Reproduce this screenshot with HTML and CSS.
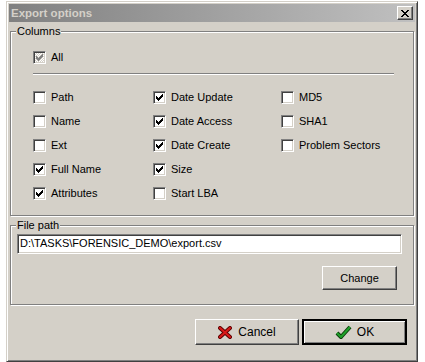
FILE: index.html
```html
<!DOCTYPE html>
<html>
<head>
  <title>Export options</title>
  <link rel="stylesheet" href="styles.css">
</head>
<body>
  <div class="window">
    <div class="titlebar">
      <span class="title">Export options</span>
      <span class="close-btn">
        <svg width="8" height="7" viewBox="0 0 8 7"><path d="M0 0h2v1h-2z M6 0h2v1h-2z M1 1h2v1h-2z M5 1h2v1h-2z M2 2h4v1h-4z M3 3h2v1h-2z M2 4h4v1h-4z M1 5h2v1h-2z M5 5h2v1h-2z M0 6h2v1h-2z M6 6h2v1h-2z" fill="#000"/></svg>
      </span>
    </div>

    <!-- columns to export -->
    <div class="group columns">
      <span class="group-label">Columns</span>
      <div class="opt">
        <span class="check disabled"><svg width="7" height="7" viewBox="0 0 7 7"><path class="tick" d="M6 0h1v1h-1z M5 1h2v1h-2z M0 2h1v1h-1z M4 2h3v1h-3z M0 3h2v1h-2z M3 3h3v1h-3z M0 4h5v1h-5z M1 5h3v1h-3z M2 6h1v1h-1z"/></svg></span>
        <span>All</span>
      </div>
      <div class="separator"></div>
      <div class="options">
        <div class="col col-1">
          <div class="opt"><span class="check"></span><span>Path</span></div>
          <div class="opt"><span class="check"></span><span>Name</span></div>
          <div class="opt"><span class="check"></span><span>Ext</span></div>
          <div class="opt"><span class="check"><svg width="7" height="7" viewBox="0 0 7 7"><path class="tick" d="M6 0h1v1h-1z M5 1h2v1h-2z M0 2h1v1h-1z M4 2h3v1h-3z M0 3h2v1h-2z M3 3h3v1h-3z M0 4h5v1h-5z M1 5h3v1h-3z M2 6h1v1h-1z"/></svg></span><span>Full Name</span></div>
          <div class="opt"><span class="check"><svg width="7" height="7" viewBox="0 0 7 7"><path class="tick" d="M6 0h1v1h-1z M5 1h2v1h-2z M0 2h1v1h-1z M4 2h3v1h-3z M0 3h2v1h-2z M3 3h3v1h-3z M0 4h5v1h-5z M1 5h3v1h-3z M2 6h1v1h-1z"/></svg></span><span>Attributes</span></div>
        </div>
        <div class="col col-2">
          <div class="opt"><span class="check"><svg width="7" height="7" viewBox="0 0 7 7"><path class="tick" d="M6 0h1v1h-1z M5 1h2v1h-2z M0 2h1v1h-1z M4 2h3v1h-3z M0 3h2v1h-2z M3 3h3v1h-3z M0 4h5v1h-5z M1 5h3v1h-3z M2 6h1v1h-1z"/></svg></span><span>Date Update</span></div>
          <div class="opt"><span class="check"><svg width="7" height="7" viewBox="0 0 7 7"><path class="tick" d="M6 0h1v1h-1z M5 1h2v1h-2z M0 2h1v1h-1z M4 2h3v1h-3z M0 3h2v1h-2z M3 3h3v1h-3z M0 4h5v1h-5z M1 5h3v1h-3z M2 6h1v1h-1z"/></svg></span><span>Date Access</span></div>
          <div class="opt"><span class="check"><svg width="7" height="7" viewBox="0 0 7 7"><path class="tick" d="M6 0h1v1h-1z M5 1h2v1h-2z M0 2h1v1h-1z M4 2h3v1h-3z M0 3h2v1h-2z M3 3h3v1h-3z M0 4h5v1h-5z M1 5h3v1h-3z M2 6h1v1h-1z"/></svg></span><span>Date Create</span></div>
          <div class="opt"><span class="check"><svg width="7" height="7" viewBox="0 0 7 7"><path class="tick" d="M6 0h1v1h-1z M5 1h2v1h-2z M0 2h1v1h-1z M4 2h3v1h-3z M0 3h2v1h-2z M3 3h3v1h-3z M0 4h5v1h-5z M1 5h3v1h-3z M2 6h1v1h-1z"/></svg></span><span>Size</span></div>
          <div class="opt"><span class="check"></span><span>Start LBA</span></div>
        </div>
        <div class="col col-3">
          <div class="opt"><span class="check"></span><span>MD5</span></div>
          <div class="opt"><span class="check"></span><span>SHA1</span></div>
          <div class="opt"><span class="check"></span><span>Problem Sectors</span></div>
        </div>
      </div>
    </div>

    <!-- output file -->
    <div class="group filepath">
      <span class="group-label">File path</span>
      <div class="textbox">D:\TASKS\FORENSIC_DEMO\export.csv</div>
      <div class="change-row">
        <span class="btn change-btn">Change</span>
      </div>
    </div>

    <div class="actions">
      <span class="btn action-btn">
        <svg width="14" height="13" viewBox="0 0 14 13">
          <path d="M2 2 L12 11 M12 2 L2 11" stroke="#5a0000" stroke-width="4" stroke-linecap="round" fill="none"/>
          <path d="M2 2 L12 11 M12 2 L2 11" stroke="#d81818" stroke-width="2.2" stroke-linecap="round" fill="none"/>
        </svg>
        <span>Cancel</span>
      </span>
      <span class="btn action-btn default">
        <svg width="17" height="15" viewBox="0 0 17 15">
          <path d="M2 8 L6 12 L15 2" stroke="#0a3a0a" stroke-width="4" stroke-linejoin="round" fill="none"/>
          <path d="M2 8 L6 12 L15 2" stroke="#1fa02a" stroke-width="2.2" stroke-linejoin="round" fill="none"/>
        </svg>
        <span>OK</span>
      </span>
    </div>
  </div>
</body>
</html>
```

FILE: styles.css
```css
body {
    margin: 0;
    background-color: #FFFFFF;
    font-family: "Liberation Sans", Arial, sans-serif;
    font-size: 11px;
    color: #000000;
}
.window {
    margin: 1px 0 0 6px;
    width: 412px;
    height: 361px;
    box-sizing: border-box;
    background-color: #D4D0C8;
    border: 1px solid;
    border-color: #D4D0C8 #404040 #404040 #D4D0C8;
    padding: 2px;
    box-shadow: inset 1px 1px 0 #FFFFFF, inset -1px -1px 0 #808080;
    display: flex;
    flex-direction: column;
}
.titlebar {
    height: 18px;
    display: flex;
    align-items: center;
    justify-content: space-between;
    padding: 0 2px 0 2px;
    background: linear-gradient(to right, #808080, #C0C0C0);
}
.title {
    font-weight: bold;
    font-size: 11.5px;
    color: #D4D0C8;
}
.close-btn {
    width: 16px;
    height: 14px;
    box-sizing: border-box;
    display: flex;
    align-items: center;
    justify-content: center;
    background-color: #D4D0C8;
    border: 1px solid;
    border-color: #FFFFFF #404040 #404040 #FFFFFF;
    box-shadow: inset -1px -1px 0 #808080;
}
.group {
    position: relative;
    margin: 9px 1px 0 1px;
    border: 1px solid #808080;
    box-shadow: inset 1px 1px 0 #FFFFFF, 1px 1px 0 #FFFFFF;
}
.group-label {
    position: absolute;
    top: -7px;
    left: 5px;
    padding: 0 1px;
    line-height: 13px;
    background-color: #D4D0C8;
}
.columns {
    padding: 19px 0 15px 22px;
}
.opt {
    height: 13px;
    display: flex;
    align-items: center;
    gap: 5px;
    line-height: 13px;
    white-space: nowrap;
}
.check {
    width: 13px;
    height: 13px;
    box-sizing: border-box;
    flex: none;
    display: flex;
    align-items: center;
    justify-content: center;
    background-color: #FFFFFF;
    border: 1px solid;
    border-color: #808080 #FFFFFF #FFFFFF #808080;
    box-shadow: inset 1px 1px 0 #404040, inset -1px -1px 0 #D4D0C8;
}
.tick {
    fill: #000000;
}
.check.disabled {
    background-color: #E8E6E1;
    background-image: repeating-conic-gradient(#D4D0C8 0 25%, #FFFFFF 0 50%);
    background-size: 2px 2px;
}
.check.disabled .tick {
    fill: #808080;
}
.separator {
    width: 361px;
    height: 1px;
    margin-top: 9px;
    background-color: #808080;
    border-bottom: 1px solid #FFFFFF;
}
.options {
    margin-top: 16px;
    display: flex;
}
.col {
    display: flex;
    flex-direction: column;
    gap: 11px;
}
.col-1 {
    width: 120px;
}
.col-2 {
    width: 128px;
}
.filepath {
    padding: 8px 16px 14px 6px;
}
.textbox {
    width: 385px;
    height: 20px;
    box-sizing: border-box;
    padding: 0 2px;
    line-height: 16px;
    background-color: #FFFFFF;
    border: 1px solid;
    border-color: #808080 #FFFFFF #FFFFFF #808080;
    box-shadow: inset 1px 1px 0 #404040, inset -1px -1px 0 #D4D0C8;
    white-space: nowrap;
}
.change-row {
    display: flex;
    justify-content: flex-end;
    margin-top: 12px;
}
.btn {
    box-sizing: border-box;
    display: flex;
    align-items: center;
    justify-content: center;
    background-color: #D4D0C8;
    border: 1px solid;
    border-color: #FFFFFF #404040 #404040 #FFFFFF;
    box-shadow: inset -1px -1px 0 #808080;
}
.change-btn {
    width: 75px;
    height: 24px;
}
.actions {
    display: flex;
    justify-content: flex-end;
    gap: 3px;
    margin: 14px 8px 0 0;
}
.action-btn {
    width: 104px;
    height: 26px;
    gap: 6px;
    font-size: 12px;
}
.action-btn.default {
    width: 105px;
    border: 2px solid #000000;
    box-shadow: inset 1px 1px 0 #FFFFFF, inset -1px -1px 0 #808080;
    gap: 5px;
}
```
